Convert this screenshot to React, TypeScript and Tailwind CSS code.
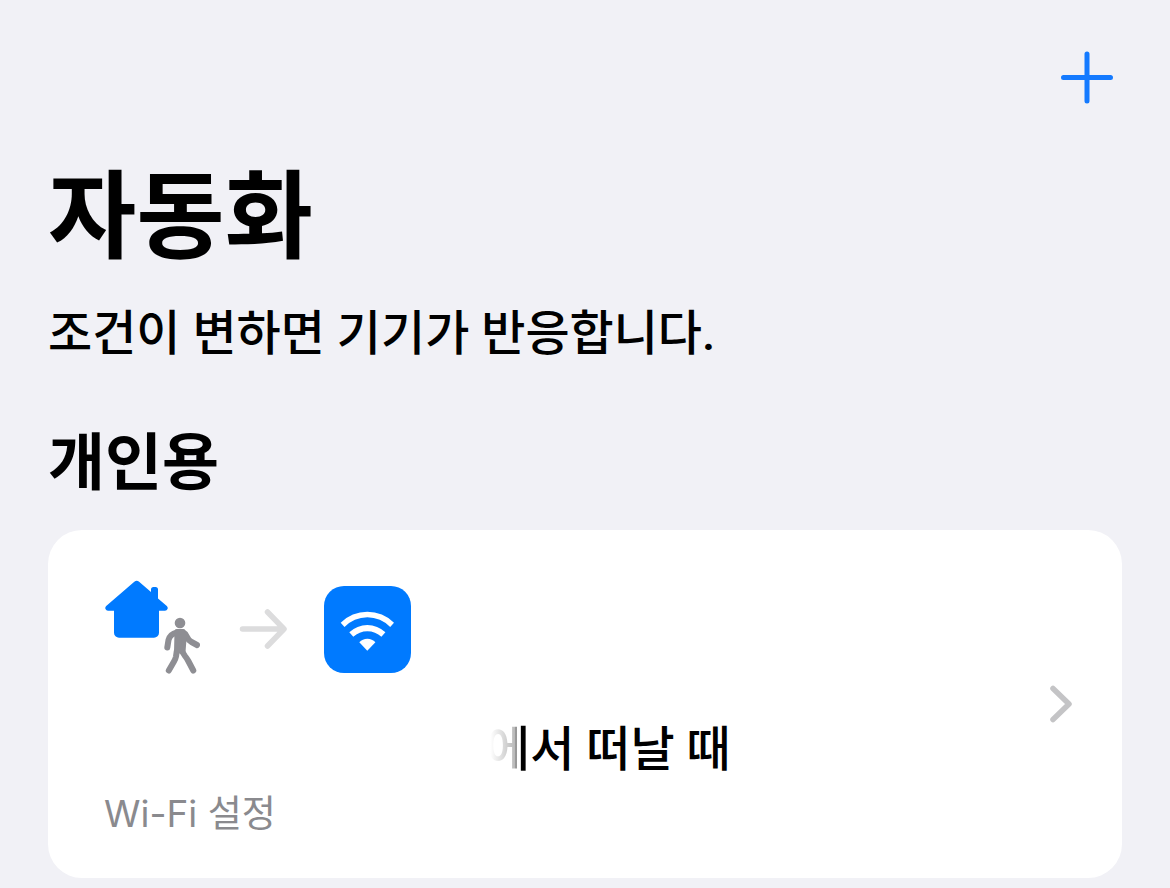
import React from "react";

function HomeLeaveIcon() {
  return (
    <svg className="w-24 h-[98px]" viewBox="-1 0 96 98" aria-hidden="true">
      <path
        fill="#007aff"
        d="M29.3 1.8a3.8 3.8 0 0 1 4.8 0L46 12V9.5A2.5 2.5 0 0 1 48.5 7h2A2.5 2.5 0 0 1 53 9.5V18.5L61.8 26A2.7 2.7 0 0 1 60 30.7H54V52.7A5 5 0 0 1 49 57.7H14A5 5 0 0 1 9 52.7V30.7H3A2.7 2.7 0 0 1 1.2 26Z"
      />
      <g
        fill="none"
        stroke="#8e8e93"
        strokeWidth="6"
        strokeLinecap="round"
        strokeLinejoin="round"
      >
        <circle cx="75" cy="43" r="5.3" fill="#8e8e93" stroke="none" />
        <path d="M72 52.3Q65 54 63.5 60L62.3 67.5" />
        <path d="M78 52.3Q80.5 53.5 82 57Q83.5 60.5 86.5 62L92 65" />
        <path d="M71.8 71L71 76.5Q70.5 79 69 81.5L63.8 90.5" />
        <path d="M76.8 71L80 76Q82 78.5 83.3 81L88.3 90.5" />
        <path
          fill="#8e8e93"
          strokeWidth="5"
          d="M72 51.5H78L79 59L78 72L75 70.5L71.5 72Z"
        />
      </g>
    </svg>
  );
}

function WifiIcon() {
  return (
    <svg className="w-[87px] h-[87px]" viewBox="0 0 87 87" aria-hidden="true">
      <g fill="#fff">
        <path d="M16.7 36.7A37.7 37.7 0 0 1 70 36.7L66.2 41A31.5 31.5 0 0 0 20.5 41Z" />
        <path d="M25.3 46.2A26.5 26.5 0 0 1 61.4 46.2L57.4 50.8A20.5 20.5 0 0 0 29.3 50.8Z" />
        <path d="M35.3 56.3A10.8 10.8 0 0 1 51.4 56.3L43.3 64.7Z" />
      </g>
    </svg>
  );
}

function App() {
  return (
    <main className="min-h-screen bg-[#f1f1f6] px-12 pt-[42px] pb-2 text-black font-['Noto_Sans_CJK_KR',sans-serif]">
      <div className="flex justify-end">
        <button type="button" aria-label="추가">
          <svg
            className="w-[70px] h-[70px]"
            viewBox="0 0 70 70"
            fill="none"
            stroke="#147aff"
            strokeWidth="5"
            strokeLinecap="round"
          >
            <path d="M11.5 35.5H58.5M35 12V59" />
          </svg>
        </button>
      </div>
      <h1 className="mt-12 text-[96px] leading-[98px] font-bold">자동화</h1>
      <p className="mt-11 text-[48px] leading-[64px] font-medium font-['Roboto','Noto_Sans_CJK_KR',sans-serif]">
        조건이 변하면 기기가 반응합니다.
      </p>
      <h2 className="mt-13 text-[62px] leading-[80px] font-bold">개인용</h2>
      <a
        href="#automation"
        className="mt-8 flex items-center rounded-[34px] bg-white pr-12 pl-14"
      >
        <div className="flex-1 pt-[50px] pb-8">
          <div className="flex items-center">
            <HomeLeaveIcon />
            <svg
              className="ml-9 w-[52px] h-11"
              viewBox="-1 0 52 44"
              fill="none"
              stroke="#dcdcdd"
              strokeWidth="5.5"
              strokeLinecap="round"
              strokeLinejoin="round"
              aria-hidden="true"
            >
              <path d="M5.5 22H46.5M30.5 5L47 22L30.5 39" />
            </svg>
            <div className="ml-9 rounded-[20px] bg-[#007aff]">
              <WifiIcon />
            </div>
          </div>
          <div className="mt-10 pl-[382px] text-[48px] leading-[64px] font-medium font-['Roboto','Noto_Sans_CJK_KR',sans-serif]">
            <span className="bg-linear-to-r from-white from-10% via-[#bbb] via-65% to-black to-80% bg-clip-text text-transparent">
              에
            </span>
            서 떠날 때
          </div>
          <div className="text-[37px] leading-[64px] text-[#8a8a8e] font-['Inter','Noto_Sans_CJK_KR',sans-serif]">
            Wi-Fi 설정
          </div>
        </div>
        <svg
          className="w-7 h-11"
          viewBox="0 0 28 44"
          fill="none"
          stroke="#c4c4c6"
          strokeWidth="5.5"
          strokeLinecap="round"
          strokeLinejoin="round"
          aria-hidden="true"
        >
          <path d="M7 6.5L23 22L7 37.5" />
        </svg>
      </a>
    </main>
  );
}

export default App;
